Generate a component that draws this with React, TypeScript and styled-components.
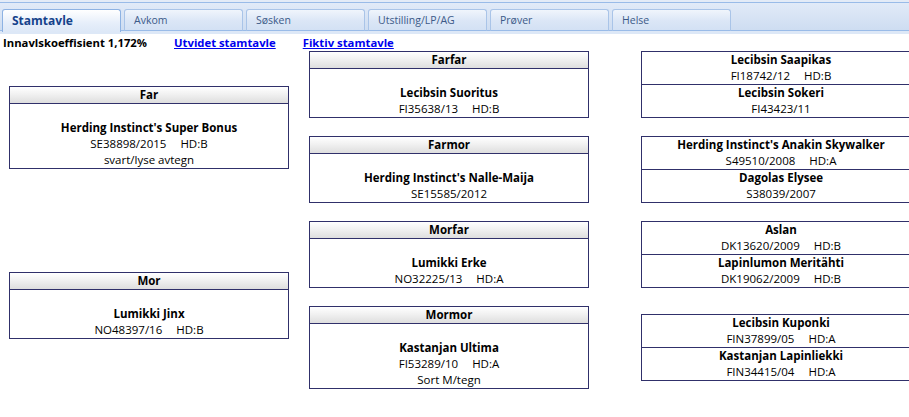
import React from 'react';
import styled, { createGlobalStyle } from 'styled-components';

const GlobalStyle = createGlobalStyle`
  html, body {
    margin: 0;
    padding: 0;
    background: #ffffff;
    overflow: hidden;
  }
  body {
    font-family: "Open Sans", "Liberation Sans", Arial, sans-serif;
    color: #000;
  }
`;

const TabStrip = styled.div`
  height: 34px;
  box-sizing: border-box;
  border-top: 2px solid #e3ebf7;
  background: linear-gradient(#99bbe8, #99bbe8) top / 100% 1px no-repeat,
    linear-gradient(#e2ebf8, #cddcf1);
  border-bottom: 3px solid #dde8f7;
  box-shadow: inset 0 -1px 0 #99bbe8;
  display: flex;
  align-items: flex-end;
  padding: 0 0 0 2px;
`;

const Tab = styled.div<{ $active?: boolean }>`
  width: 119px;
  margin-right: 3px;
  box-sizing: border-box;
  padding-left: 9px;
  border: 1px solid ${(p) => (p.$active ? '#8db2e3' : '#a9c4e8')};
  border-bottom: ${(p) => (p.$active ? 'none' : '1px solid #99bbe8')};
  border-radius: 3px 3px 0 0;
  background: ${(p) =>
    p.$active
      ? 'linear-gradient(#ffffff, #e6eefa 60%, #dde8f7)'
      : 'linear-gradient(#f0f5fc, #dbe6f6 55%, #d3e1f4)'};
  color: ${(p) => (p.$active ? '#15428b' : '#3c5a88')};
  font-weight: ${(p) => (p.$active ? 700 : 400)};
  font-size: ${(p) => (p.$active ? '12px' : '10.5px')};
  line-height: 21px;
  white-space: nowrap;
  margin-bottom: ${(p) => (p.$active ? '-1px' : '0')};
  height: ${(p) => (p.$active ? '23px' : '22px')};
`;

const InfoLine = styled.div`
  height: 17px;
  display: flex;
  align-items: center;
  padding-left: 3px;
  font-size: 11.3px;
  font-weight: 700;
  white-space: nowrap;
`;

const InfoLink = styled.a`
  margin-left: 27px;
  color: #0000ee;
  text-decoration: underline;
`;

const PedigreeGrid = styled.div`
  display: grid;
  grid-template-columns: 280px 280px 280px;
  grid-template-rows: repeat(4, auto);
  column-gap: 20px;
  row-gap: 18px;
  padding-left: 9px;
  width: max-content;
`;

const Box = styled.div<{ $col: number; $row: number; $span?: number }>`
  grid-column: ${(p) => p.$col};
  grid-row: ${(p) => p.$row} / span ${(p) => p.$span ?? 1};
  align-self: center;
  justify-self: start;
  width: 280px;
  box-sizing: border-box;
  margin-left: ${(p) => (p.$col === 3 ? '32px' : '0')};
  border: 1px solid #30306a;
  background: #fff;
  text-align: center;
  font-size: 11.5px;
  line-height: 16px;
`;

const BoxHeader = styled.div`
  height: 16px;
  border-bottom: 1px solid #30306a;
  background: linear-gradient(#ffffff, #f1f1f1 45%, #dedede);
  font-weight: 700;
  line-height: 16px;
`;

const BoxBody = styled.div`
  padding-top: 16px;
`;

const Half = styled.div`
  & + & {
    border-top: 1px solid #30306a;
  }
`;

const Name = styled.div`
  font-weight: 700;
`;

const Reg = styled.div``;

const Hd = styled.span`
  margin-left: 14px;
`;

type Dog = { name: string; reg: string; hd?: string; color?: string };

const RegLine = ({ dog }: { dog: Dog }) => (
  <Reg>
    {dog.reg}
    {dog.hd && <Hd>HD:{dog.hd}</Hd>}
  </Reg>
);

const Ancestor = ({
  title,
  dog,
  col,
  row,
  span,
}: {
  title: string;
  dog: Dog;
  col: number;
  row: number;
  span?: number;
}) => (
  <Box $col={col} $row={row} $span={span}>
    <BoxHeader>{title}</BoxHeader>
    <BoxBody>
      <Name>{dog.name}</Name>
      <RegLine dog={dog} />
      {dog.color && <Reg>{dog.color}</Reg>}
    </BoxBody>
  </Box>
);

const Pair = ({ dogs, row }: { dogs: Dog[]; row: number }) => (
  <Box $col={3} $row={row}>
    {dogs.map((d) => (
      <Half key={d.reg}>
        <Name>{d.name}</Name>
        <RegLine dog={d} />
      </Half>
    ))}
  </Box>
);

const tabs = ['Stamtavle', 'Avkom', 'Søsken', 'Utstilling/LP/AG', 'Prøver', 'Helse'];

const grandparents: { title: string; dog: Dog }[] = [
  { title: 'Farfar', dog: { name: 'Lecibsin Suoritus', reg: 'FI35638/13', hd: 'B' } },
  { title: 'Farmor', dog: { name: "Herding Instinct's Nalle-Maija", reg: 'SE15585/2012' } },
  { title: 'Morfar', dog: { name: 'Lumikki Erke', reg: 'NO32225/13', hd: 'A' } },
  {
    title: 'Mormor',
    dog: { name: 'Kastanjan Ultima', reg: 'FI53289/10', hd: 'A', color: 'Sort M/tegn' },
  },
];

const greatGrandparents: Dog[][] = [
  [
    { name: 'Lecibsin Saapikas', reg: 'FI18742/12', hd: 'B' },
    { name: 'Lecibsin Sokeri', reg: 'FI43423/11' },
  ],
  [
    { name: "Herding Instinct's Anakin Skywalker", reg: 'S49510/2008', hd: 'A' },
    { name: 'Dagolas Elysee', reg: 'S38039/2007' },
  ],
  [
    { name: 'Aslan', reg: 'DK13620/2009', hd: 'B' },
    { name: 'Lapinlumon Meritähti', reg: 'DK19062/2009', hd: 'B' },
  ],
  [
    { name: 'Lecibsin Kuponki', reg: 'FIN37899/05', hd: 'A' },
    { name: 'Kastanjan Lapinliekki', reg: 'FIN34415/04', hd: 'A' },
  ],
];

export default function App() {
  return (
    <>
      <GlobalStyle />
      <TabStrip>
        {tabs.map((t, i) => (
          <Tab key={t} $active={i === 0}>
            {t}
          </Tab>
        ))}
      </TabStrip>
      <InfoLine>
        Innavlskoeffisient 1,172%
        <InfoLink href="#">Utvidet stamtavle</InfoLink>
        <InfoLink href="#">Fiktiv stamtavle</InfoLink>
      </InfoLine>
      <PedigreeGrid>
        <Ancestor
          title="Far"
          col={1}
          row={1}
          span={2}
          dog={{
            name: "Herding Instinct's Super Bonus",
            reg: 'SE38898/2015',
            hd: 'B',
            color: 'svart/lyse avtegn',
          }}
        />
        <Ancestor
          title="Mor"
          col={1}
          row={3}
          span={2}
          dog={{ name: 'Lumikki Jinx', reg: 'NO48397/16', hd: 'B' }}
        />
        {grandparents.map((g, i) => (
          <Ancestor key={g.title} title={g.title} dog={g.dog} col={2} row={i + 1} />
        ))}
        {greatGrandparents.map((pair, i) => (
          <Pair key={i} dogs={pair} row={i + 1} />
        ))}
      </PedigreeGrid>
    </>
  );
}
